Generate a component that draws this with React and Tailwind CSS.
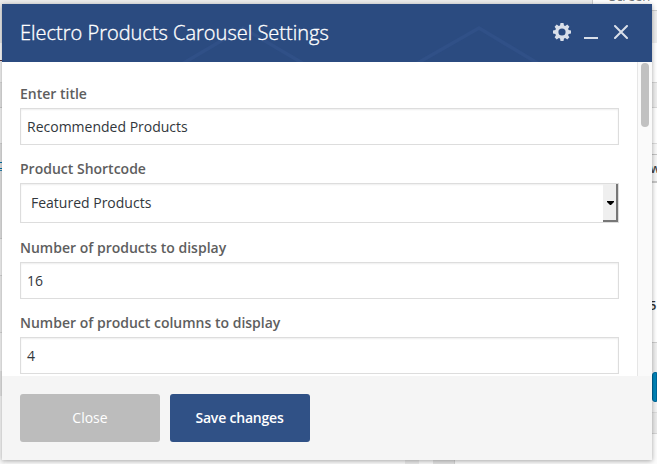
import React from "react";

const leftStrip = [
  ["h-[43px]", "bg-[#ececec]"], ["h-[17px]", "bg-white"], ["h-px", "bg-[#5a3540]"],
  ["h-[21px]", "bg-[#f6f6f6]"], ["h-px", "bg-[#dcdcdc]"], ["h-[24px]", "bg-[#e8e8e8]"],
  ["h-px", "bg-[#cfcfcf]"], ["h-[35px]", "bg-[#f9f9f9]"], ["h-px", "bg-[#d8d8d8]"],
  ["h-[18px]", "bg-[#e5e5e5]"], ["h-px", "bg-[#0073aa]"], ["h-[5px]", "bg-[#e5e5e5]"],
  ["h-px", "bg-[#0073aa]"], ["h-px", "bg-[#e5e5e5]"], ["h-px", "bg-[#2f88b4]"],
  ["h-[67px]", "bg-[#e5e5e5]"], ["h-px", "bg-[#d2d2d2]"], ["h-[36px]", "bg-[#f8f8f8]"],
  ["h-px", "bg-[#dadada]"], ["h-[56px]", "bg-[#f1f1f1]"], ["h-px", "bg-[#dadada]"],
  ["h-[38px]", "bg-[#f8f8f8]"], ["h-[25px]", "bg-[#e7e7e7]"], ["h-[68px]", "bg-[#f9f9f9]"],
];

const rightStrip = [
  ["h-[10px]", "bg-white"], ["h-px", "bg-[#cccccc]"], ["h-[32px]", "bg-[#ededed]"],
  ["h-[39px]", "bg-white"], ["h-px", "bg-[#d5d5d5]"], ["h-[24px]", "bg-[#eeeeee]"],
  ["h-px", "bg-[#d8d8d8]"], ["h-[35px]", "bg-white"], ["h-px", "bg-[#dddddd]"],
  ["h-[10px]", "bg-[#f9f9f9]"], ["h-px", "bg-[#c4c4c4]"], ["h-[26px]", "bg-[#f6f6f6]"],
  ["h-[2px]", "bg-[#c8c8c8]"], ["h-[159px]", "bg-white"], ["h-px", "bg-[#cfcfcf]"],
  ["h-[29px]", "bg-[#f0f0f0]"], ["h-[30px]", "bg-[#0085ba] border border-[#006799] rounded-l-[3px]"],
  ["h-[10px]", "bg-[#f3f3f3]"], ["h-px", "bg-[#dcdcdc]"], ["h-[20px]", "bg-[#ebebeb]"],
  ["h-px", "bg-[#d5d5d5]"], ["h-[30px]", "bg-[#fcfcfc]"],
];

function Strip({ bands }) {
  return (
    <div className="flex w-[5px] flex-col">
      {bands.map(([height, fill], i) => (
        <div key={i} className={`${height} ${fill} shrink-0`} />
      ))}
    </div>
  );
}

function Page() {
  return (
    <div className="flex h-full">
      <Strip bands={leftStrip} />
      <div className="flex flex-1 flex-col justify-between">
        <div className="flex h-[11px] justify-end bg-[#ececec]">
          <div className="h-full w-[60px] border-b border-l border-[#cccccc] bg-white" />
        </div>
        <div className="flex h-[10px] bg-[#fcfcfc]">
          <div className="ml-[400px] h-full w-[14px] bg-[#ebebeb]" />
          <div className="ml-[14px] h-full w-[22px] border-r border-[#d5d5d5] bg-[#e5e5e5]" />
        </div>
      </div>
      <Strip bands={rightStrip} />
      <span className="absolute left-[609px] top-[-12px] whitespace-nowrap text-[13px] leading-[17px] text-[#72777c]">Screen</span>
      <span className="absolute left-[650px] top-[159px] text-[13px] font-semibold leading-[18px] text-[#444]">w</span>
      <span className="absolute left-[649px] top-[296px] text-[13px] font-semibold leading-[18px] text-[#333]">5</span>
    </div>
  );
}

function Field({ label, children }) {
  return (
    <div className="flex flex-col">
      <div className="mb-[5px] h-[18px] text-[14px] font-semibold leading-[18px] text-[#5e5e5e]">{label}</div>
      {children}
    </div>
  );
}

function TextBox({ value }) {
  return (
    <div className="flex h-[37px] items-center border border-[#dddddd] bg-white px-[6px] text-[14px] text-[#32373c] shadow-[inset_0_1px_2px_rgba(0,0,0,0.07)]">
      {value}
    </div>
  );
}

function Select({ value }) {
  return (
    <div className="flex h-[40px] items-center justify-between border border-[#dddddd] bg-white pl-[10px] text-[14px] text-[#32373c] shadow-[inset_0_1px_2px_rgba(0,0,0,0.07)]">
      <span className="pb-[2px]">{value}</span>
      <div className="flex h-[38px] w-[15px] items-center justify-center border-b-2 border-r-2 border-[#777777] bg-[#efefef]">
        <svg width="7" height="4" viewBox="0 0 7 4" className="ml-[2px] mt-[2px]">
          <path d="M0 0H7V1L4 4H3L0 1Z" fill="#000" />
        </svg>
      </div>
    </div>
  );
}

function Header() {
  return (
    <div className="relative flex h-[58px] shrink-0 items-center justify-between bg-[#2b4b80] pb-[2px] pl-[18px] pr-[24px]">
      <svg className="absolute inset-0" width="650" height="58" fill="none" stroke="#305087" strokeWidth="3.5">
        <path d="M180 60L241 24L302 60M414 60L477 24L537 60" />
      </svg>
      <h1 className="relative text-[20px] font-light leading-[27px] text-white [-webkit-text-stroke:0.35px_white]">Electro Products Carousel Settings</h1>
      <div className="relative flex h-[18px] text-[#d9dfe9]">
        <svg width="18" height="18" viewBox="0 0 18 18" fill="currentColor" fillRule="evenodd">
          <path d="M7.5 0h3l.5 2.4 1.2.5 2.1-1.3 2.1 2.1-1.3 2.1.5 1.2 2.4.5v3l-2.4.5-.5 1.2 1.3 2.1-2.1 2.1-2.1-1.3-1.2.5-.5 2.4h-3L7 15.6l-1.2-.5-2.1 1.3-2.1-2.1 1.3-2.1-.5-1.2L0 10.5v-3L2.4 7l.5-1.2-1.3-2.1 2.1-2.1 2.1 1.3L7 2.4ZM9 5.4a3.6 3.6 0 1 0 0 7.2a3.6 3.6 0 0 0 0-7.2Z" />
        </svg>
        <div className="ml-[13px] mt-[14px] h-[2px] w-[14px] bg-current" />
        <svg className="ml-[16px] mt-[2px]" width="14" height="14" viewBox="0 0 14 14" stroke="currentColor" strokeWidth="2" strokeLinecap="round">
          <path d="M1 1L13 13M13 1L1 13" />
        </svg>
      </div>
    </div>
  );
}

export default function App() {
  return (
    <div className="relative h-[464px] w-[657px] overflow-hidden bg-white font-['Open_Sans','Noto_Sans',sans-serif]">
      <Page />
      <div className="absolute left-[2px] top-[4px] flex h-[456px] w-[650px] flex-col bg-white shadow-[0_1px_5px_rgba(0,0,0,0.35)]">
        <Header />
        <div className="flex h-[314px] overflow-hidden">
          <div className="flex flex-1 flex-col gap-[15px] pl-[18px] pr-[18px] pt-[23px]">
            <Field label="Enter title"><TextBox value="Recommended Products" /></Field>
            <Field label="Product Shortcode"><Select value="Featured Products" /></Field>
            <div className="mt-[1px]">
              <Field label="Number of products to display"><TextBox value="16" /></Field>
            </div>
            <Field label="Number of product columns to display"><TextBox value="4" /></Field>
          </div>
          <div className="flex w-[15px] justify-center border-l border-[#e6e6e6] bg-[#fafafa] pt-[1px]">
            <div className="h-[64px] w-[8px] rounded-full bg-[#c1c1c1]" />
          </div>
        </div>
        <div className="flex h-[84px] shrink-0 items-center gap-[10px] bg-[#f5f5f5] pl-[18px]">
          <button className="h-[48px] w-[140px] rounded-[3px] bg-[#bcbcbc] pb-[2px] text-[14px] text-white">Close</button>
          <button className="h-[48px] w-[140px] rounded-[3px] bg-[#305186] pb-[2px] pr-[1px] text-[14px] font-semibold tracking-[-0.2px] text-white">Save changes</button>
        </div>
      </div>
    </div>
  );
}
